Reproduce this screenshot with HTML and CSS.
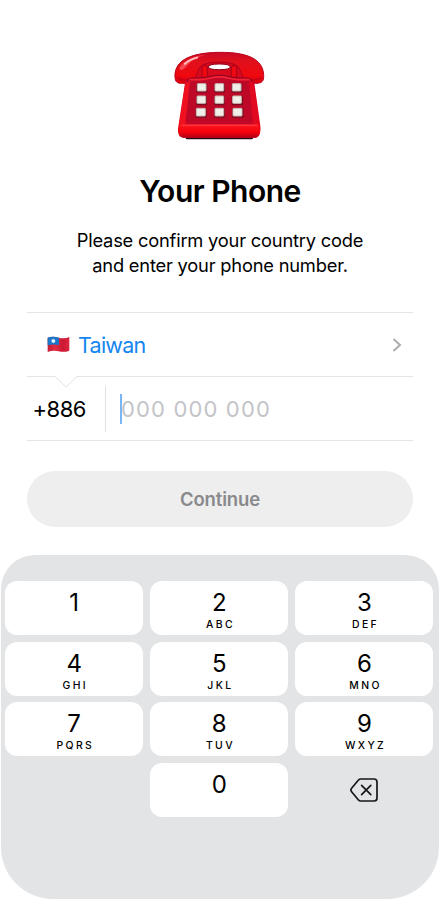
FILE: index.html
```html
<!DOCTYPE html>
<html lang="en">
<head>
<meta charset="utf-8">
<title>Your Phone</title>
<link rel="stylesheet" href="styles.css">
</head>
<body>
<main class="screen">
  <svg class="phone" viewBox="0 0 360 330" aria-hidden="true">
    <defs>
      <linearGradient id="handset" x1="0" y1="0" x2="0" y2="1">
        <stop offset="0" stop-color="#c80a26"/><stop offset=".3" stop-color="#e0101c"/><stop offset=".75" stop-color="#f0080e"/><stop offset="1" stop-color="#d8000c"/>
      </linearGradient>
      <linearGradient id="base" x1="0" y1="0" x2="1" y2="0">
        <stop offset="0" stop-color="#e8000c"/><stop offset=".12" stop-color="#c4082a"/><stop offset=".88" stop-color="#c00828"/><stop offset="1" stop-color="#f00010"/>
      </linearGradient>
      <linearGradient id="foot" x1="0" y1="0" x2="0" y2="1">
        <stop offset="0" stop-color="#ff1720"/><stop offset=".6" stop-color="#f2000c"/><stop offset="1" stop-color="#b00016"/>
      </linearGradient>
    </defs>
    <rect x="77" y="284" width="202" height="14" rx="4" fill="#280814"/>
    <path d="M45 112C42 69 78 38 178 37S313 66 311 112C310 128 300 130 286 130H64C51 130 46 125 45 112Z" fill="url(#handset)" stroke="#bd001b" stroke-width="3"/>
    <path d="M58 84Q80 49 135 45Q99 54 82 76Q71 91 61 90Z" fill="#f84552"/>
    <path d="M74 72Q90 58 112 53" fill="none" stroke="#ffc0c0" stroke-width="5" stroke-linecap="round"/>
    <path d="M52 113Q72 125 98 118M258 118Q284 125 304 113" fill="none" stroke="#c4001b" stroke-width="4"/>
    <path d="M101 119Q108 112 113 95Q119 66 178 66T242 95Q247 112 254 119Z" fill="#d60a1c"/>
    <path d="M101 119Q108 112 113 95Q119 66 178 66T242 95Q247 112 254 119" fill="none" stroke="#a80420" stroke-width="3"/>
    <path d="M145 81Q146 72 178 72T211 81Q210 89 178 89T145 81Z" fill="#fff" stroke="#8e0018" stroke-width="3"/>
    <path d="M126 112V84Q126 76 134 76T142 84V112ZM214 112V84Q214 76 222 76T230 84V112Z" fill="#ee0812" stroke="#9c001b" stroke-width="2.5"/>
    <path d="M94 113H121Q137 112 151 108Q178 101 205 108Q219 112 235 113H263Q279 114 283 129L301 258Q304 292 286 293H70Q52 292 54 266L75 129Q78 114 94 113Z" fill="url(#base)"/>
    <path d="M82 122Q84 115 94 114H121Q137 113 151 109Q178 102 205 109Q219 113 235 114H263Q274 115 277 123" fill="none" stroke="#8e0420" stroke-width="3"/>
    <path d="M88 119H122Q138 118 152 114Q178 107 204 114Q218 118 234 119H269" fill="none" stroke="#f42434" stroke-width="5"/>
    <path d="M90 121L76 132L57 256H76Z" fill="#ef1020"/>
    <path d="M267 121L281 132L299 256H279Z" fill="#e20a20"/>
    <path d="M94 125H262L278 243H77Z" fill="#bd0828"/>
    <path d="M60 253H296Q305 292 286 293H70Q49 290 60 253Z" fill="url(#foot)"/>
    <path d="M66 256H290" stroke="#ff4048" stroke-width="3" stroke-linecap="round"/>
    <g fill="#7a0c20">
      <rect x="109" y="131" width="33" height="27" rx="4"/><rect x="162" y="131" width="33" height="27" rx="4"/><rect x="214" y="131" width="33" height="27" rx="4"/>
      <rect x="108" y="168" width="33" height="28" rx="4"/><rect x="162" y="168" width="33" height="28" rx="4"/><rect x="215" y="168" width="34" height="28" rx="4"/>
      <rect x="106" y="205" width="34" height="28" rx="4"/><rect x="162" y="205" width="33" height="28" rx="4"/><rect x="216" y="205" width="35" height="28" rx="4"/>
    </g>
    <g fill="#f0eee9" stroke="#cdbab4" stroke-width="3">
      <rect x="112" y="131" width="26" height="22" rx="2"/><rect x="165" y="131" width="26" height="22" rx="2"/><rect x="217" y="131" width="26" height="22" rx="2"/>
      <rect x="111" y="168" width="26" height="22" rx="2"/><rect x="165" y="168" width="26" height="22" rx="2"/><rect x="218" y="168" width="26" height="22" rx="2"/>
      <rect x="109" y="205" width="27" height="23" rx="2"/><rect x="165" y="205" width="26" height="23" rx="2"/><rect x="219" y="205" width="27" height="23" rx="2"/>
    </g>
  </svg>
  <h1 class="title">Your Phone</h1>
  <p class="intro"><span>Please confirm your country code</span><br><span>and enter your phone number.</span></p>
  <section class="fields">
    <div class="country">
      <svg class="flag" viewBox="0 0 69 51" aria-hidden="true">
        <defs><linearGradient id="cloth"><stop offset="0" stop-color="#c51e37"/><stop offset=".35" stop-color="#e32b43"/><stop offset=".7" stop-color="#cb1933"/><stop offset="1" stop-color="#df2540"/></linearGradient></defs>
        <path d="M2 5Q18 0 35 5T67 3V44Q52 50 35 46T2 48Z" fill="url(#cloth)"/>
        <path d="M2 5Q18 0 36 5V27Q19 23 2 28Z" fill="#1976c9"/>
        <circle cx="19" cy="15" r="5.5" fill="#fff"/>
        <path d="M19 8V22M12 15H26M14 10L24 20M24 10L14 20" stroke="#d9efff" stroke-width="1"/>
      </svg>
      <span class="country-name">Taiwan</span>
      <svg class="chevron" viewBox="0 0 10 16" aria-hidden="true"><path d="M1.5 2L8 8L1.5 14"/></svg>
    </div>
    <svg class="notch" viewBox="0 0 24 14" aria-hidden="true"><path class="notch-fill" d="M1 0H23V2L12 12L1 2Z"/><path class="notch-line" d="M0 1.5H1L12 12L23 1.5H24"/></svg>
    <div class="number">
      <span class="code">+886</span>
      <span class="divider"></span>
      <span class="caret"></span>
      <span class="placeholder">000 000 000</span>
    </div>
  </section>
  <button class="continue">Continue</button>
  <section class="keyboard">
    <div class="key"><b>1</b></div>
    <div class="key"><b>2</b><small>ABC</small></div>
    <div class="key"><b>3</b><small>DEF</small></div>
    <div class="key"><b>4</b><small>GHI</small></div>
    <div class="key"><b>5</b><small>JKL</small></div>
    <div class="key"><b>6</b><small>MNO</small></div>
    <div class="key"><b>7</b><small>PQRS</small></div>
    <div class="key"><b>8</b><small>TUV</small></div>
    <div class="key"><b>9</b><small>WXYZ</small></div>
    <span></span>
    <div class="key"><b>0</b></div>
    <div class="delete"><svg viewBox="0 0 28 24" aria-hidden="true"><path d="M10.4 1H24Q27 1 27 4V20Q27 23 24 23H10.4Q9.5 23 8.7 22.2L1.8 14Q0 12 1.8 10L8.7 1.8Q9.5 1 10.4 1Z"/><path d="M11.6 7.4L20.8 16.6M20.8 7.4L11.6 16.6"/></svg></div>
  </section>
</main>
</body>
</html>
```
FILE: styles.css
```css
* { box-sizing: border-box; }
body { margin: 0; background: #fff; color: #000; font-family: Inter, "Liberation Sans", sans-serif; }
.screen { width: 440px; height: 900px; padding-top: 40px; overflow: hidden; display: flex; flex-direction: column; align-items: center; }
.phone { width: 120px; height: 110px; flex: none; }
.title { margin: 21px 0 0; height: 40px; font-size: 30px; line-height: 40px; font-weight: 600; letter-spacing: -0.5px; white-space: nowrap; }
.intro { margin: 17px 0 0; height: 50px; font-size: 18.3px; line-height: 25px; text-align: center; white-space: nowrap; letter-spacing: -0.2px; }
.fields { position: relative; width: 386px; height: 129px; margin-top: 34px; flex: none; border-top: 1px solid #e5e5e6; }
.country { height: 64px; display: flex; align-items: center; padding: 0 11px 0 20px; border-bottom: 1px solid #e5e5e6; }
.flag { width: 23px; height: 17px; }
.country-name { margin-left: 8px; color: #1486ee; font-size: 21.5px; line-height: 28px; letter-spacing: -0.75px; }
.chevron { width: 10px; height: 16px; margin-left: auto; }
.chevron path { fill: none; stroke: #adadb0; stroke-width: 2; }
.notch { position: absolute; left: 27px; top: 62px; width: 24px; height: 14px; }
.notch-fill { fill: #fff; }
.notch-line { fill: none; stroke: #e2e2e3; stroke-width: 1; }
.number { height: 64px; display: flex; align-items: center; border-bottom: 1px solid #e5e5e6; font-size: 22px; line-height: 28px; }
.code { width: 78px; padding-left: 5.5px; letter-spacing: -0.5px; }
.divider { width: 1px; height: 46px; background: #e2e2e3; }
.caret { width: 2px; height: 30px; margin-left: 14px; background: #7bb6f4; }
.placeholder { margin-left: -1px; color: #c3c4c8; letter-spacing: 1.15px; white-space: nowrap; }
.continue { width: 386px; height: 56px; flex: none; margin: 30px 0 0; padding: 0; border: 0; border-radius: 28px; background: #eee; color: #89898c; font: 600 18.5px/56px Inter, sans-serif; letter-spacing: -0.15px; }
.keyboard { width: 438px; height: 344px; flex: none; margin-top: 28px; padding: 26px 5px 0 4px; display: grid; grid-template-columns: repeat(3, 138.3px); grid-auto-rows: 54px; column-gap: 6.8px; row-gap: 6.6px; border-radius: 34px 34px 52px 52px; background: #e2e4e6; }
.key { border-radius: 12px; background: #fff; display: flex; flex-direction: column; align-items: center; }
.key b { margin-top: 8px; font-size: 24px; line-height: 28px; font-weight: 400; }
.key small { margin-top: 2px; padding-left: 2.4px; font-size: 10.4px; line-height: 12px; font-weight: 500; letter-spacing: 2.4px; }
.delete { display: flex; align-items: center; justify-content: center; }
.delete svg { width: 28px; height: 24px; fill: none; stroke: #15181b; stroke-width: 1.7; stroke-linejoin: round; stroke-linecap: round; }
```
